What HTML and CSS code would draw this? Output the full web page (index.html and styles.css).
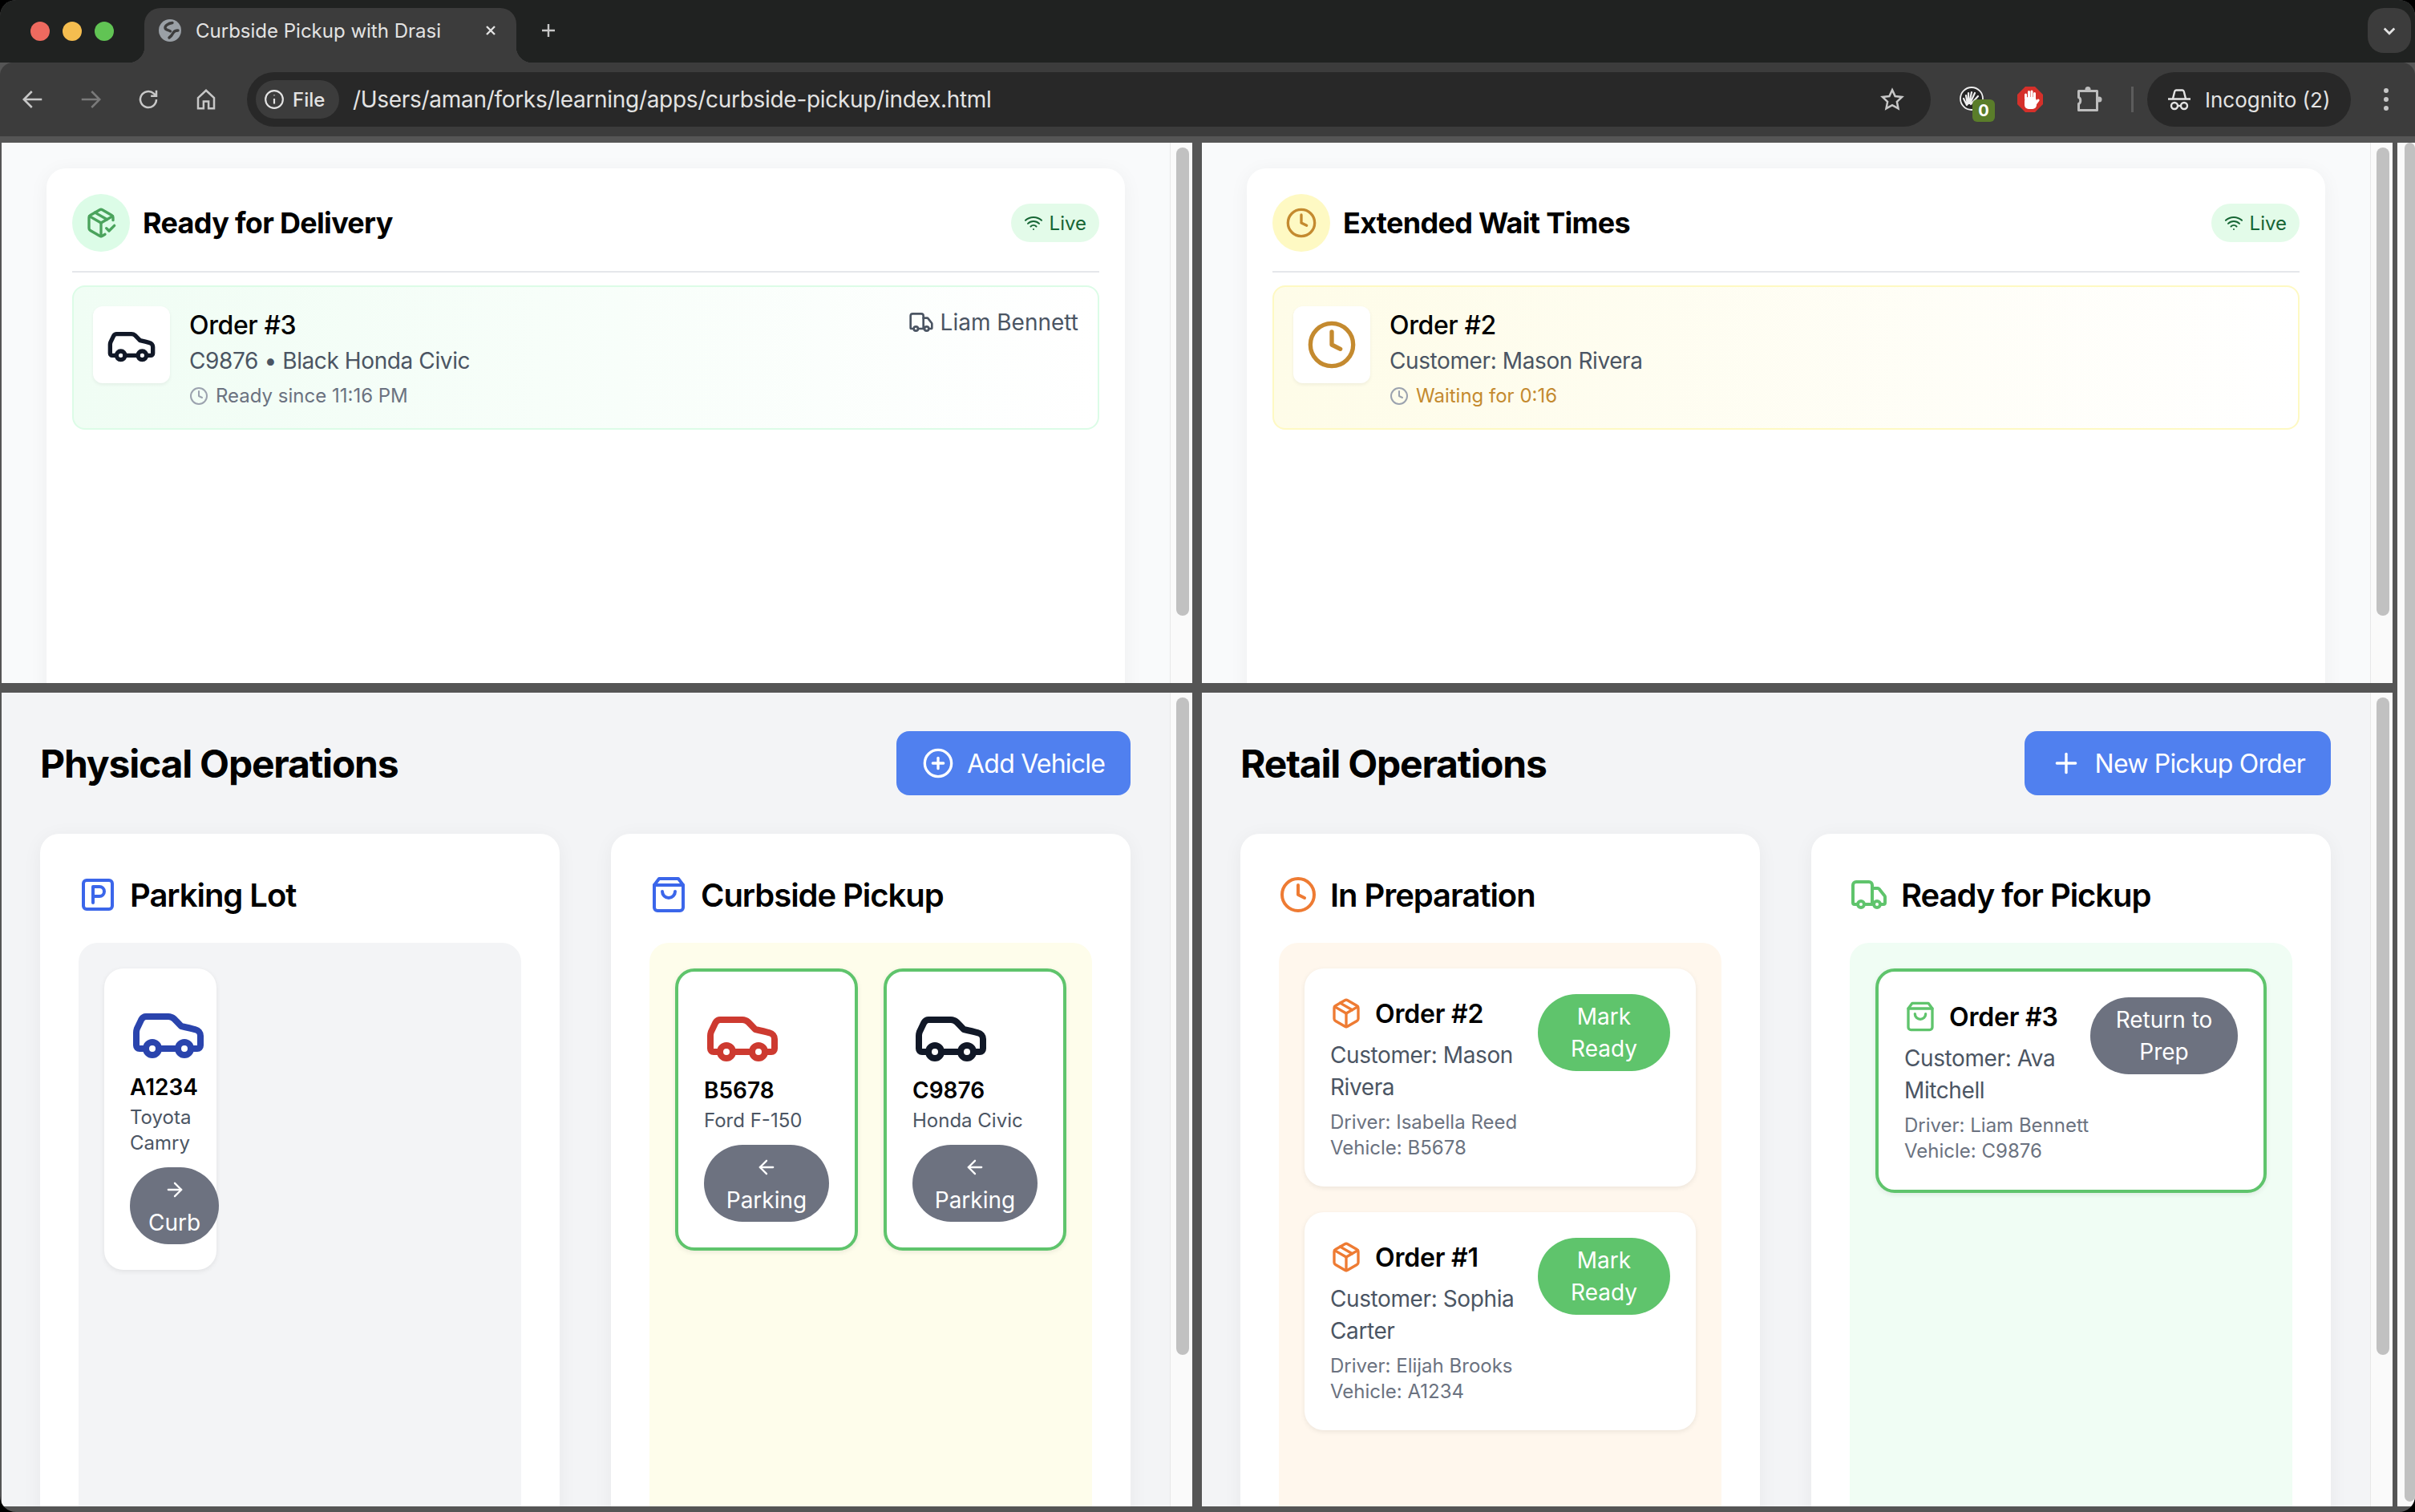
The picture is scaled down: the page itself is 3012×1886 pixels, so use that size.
FILE: index.html
```html
<!DOCTYPE html>
<html lang="en">
<head>
  <meta charset="UTF-8">
  <title>Curbside Pickup with Drasi</title>
  <link rel="stylesheet" href="styles.css">
</head>
<body>

<!-- icon set, same shapes as the app uses -->
<svg class="sprite" xmlns="http://www.w3.org/2000/svg">
  <symbol id="i-car" viewBox="0 0 24 24"><path d="M19 17h2c.6 0 1-.4 1-1v-3c0-.9-.7-1.7-1.5-1.9C18.7 10.6 16 10 16 10s-1.3-1.4-2.2-2.3c-.5-.4-1.1-.7-1.8-.7H5c-.6 0-1.1.4-1.4.9l-1.4 2.9A3.7 3.7 0 0 0 2 12v4c0 .6.4 1 1 1h2"/><circle cx="7" cy="17" r="2"/><path d="M9 17h6"/><circle cx="17" cy="17" r="2"/></symbol>
  <symbol id="i-clock" viewBox="0 0 24 24"><circle cx="12" cy="12" r="10"/><path d="M12 6v6l4 2"/></symbol>
  <symbol id="i-package-check" viewBox="0 0 24 24"><path d="m16 16 2 2 4-4"/><path d="M21 10V8a2 2 0 0 0-1-1.73l-7-4a2 2 0 0 0-2 0l-7 4A2 2 0 0 0 3 8v8a2 2 0 0 0 1 1.73l7 4a2 2 0 0 0 2 0l2-1.14"/><path d="m7.5 4.27 9 5.15"/><path d="M3.29 7 12 12l8.71-5"/><path d="M12 22V12"/></symbol>
  <symbol id="i-package" viewBox="0 0 24 24"><path d="m7.5 4.27 9 5.15"/><path d="M21 8a2 2 0 0 0-1-1.73l-7-4a2 2 0 0 0-2 0l-7 4A2 2 0 0 0 3 8v8a2 2 0 0 0 1 1.73l7 4a2 2 0 0 0 2 0l7-4A2 2 0 0 0 21 16Z"/><path d="m3.3 7 8.7 5 8.7-5"/><path d="M12 22V12"/></symbol>
  <symbol id="i-truck" viewBox="0 0 24 24"><path d="M14 18V6a2 2 0 0 0-2-2H4a2 2 0 0 0-2 2v11a1 1 0 0 0 1 1h2"/><path d="M15 18H9"/><path d="M19 18h2a1 1 0 0 0 1-1v-3.65a1 1 0 0 0-.22-.624l-3.48-4.35A1 1 0 0 0 17.52 8H14"/><circle cx="17" cy="18" r="2"/><circle cx="7" cy="18" r="2"/></symbol>
  <symbol id="i-wifi" viewBox="0 0 24 24"><path d="M12 20h.01"/><path d="M2 8.82a15 15 0 0 1 20 0"/><path d="M5 12.859a10 10 0 0 1 14 0"/><path d="M8.5 16.429a5 5 0 0 1 7 0"/></symbol>
  <symbol id="i-parking" viewBox="0 0 24 24"><rect x="3" y="3" width="18" height="18" rx="2"/><path d="M9 17V7h4a3 3 0 0 1 0 6H9"/></symbol>
  <symbol id="i-bag" viewBox="0 0 24 24"><path d="M6 2 3 6v14a2 2 0 0 0 2 2h14a2 2 0 0 0 2-2V6l-3-4Z"/><path d="M3 6h18"/><path d="M16 10a4 4 0 0 1-8 0"/></symbol>
  <symbol id="i-plus" viewBox="0 0 24 24"><path d="M5 12h14"/><path d="M12 5v14"/></symbol>
  <symbol id="i-plus-circle" viewBox="0 0 24 24"><circle cx="12" cy="12" r="10"/><path d="M8 12h8"/><path d="M12 8v8"/></symbol>
  <symbol id="i-arrow-right" viewBox="0 0 24 24"><path d="M5 12h14"/><path d="m12 5 7 7-7 7"/></symbol>
  <symbol id="i-arrow-left" viewBox="0 0 24 24"><path d="m12 19-7-7 7-7"/><path d="M19 12H5"/></symbol>
</svg>

<div class="window">

  <div class="tabstrip">
    <div class="lights">
      <span class="light light-red"></span>
      <span class="light light-yellow"></span>
      <span class="light light-green"></span>
    </div>
    <div class="tab">
      <svg class="favicon" viewBox="0 0 28 28"><circle cx="14" cy="14" r="14" fill="#9aa0a6"/><path d="M17 4.500C12 5 7.500 8 8 11c.5 3 5 2 6.500 4" fill="none" stroke="#3c3c3c" stroke-width="3.400" stroke-linecap="round"/><path d="M24 14c-3 0-5 1-6 3s-2 4-5 6" fill="none" stroke="#3c3c3c" stroke-width="3.400" stroke-linecap="round"/></svg>
      <span class="tab-title">Curbside Pickup with Drasi</span>
      <svg class="tab-close" viewBox="0 0 16 16"><path d="M3 3l10 10M13 3L3 13"/></svg>
    </div>
    <svg class="new-tab" viewBox="0 0 20 20"><path d="M10 2v16M2 10h16"/></svg>
    <div class="tab-search">
      <svg viewBox="0 0 16 16"><path d="M3 6l5 5 5-5"/></svg>
    </div>
  </div>

  <div class="toolbar">
    <svg class="tool" viewBox="0 0 24 24"><path d="M21 12H4M11 4l-8 8 8 8"/></svg>
    <svg class="tool tool-off" viewBox="0 0 24 24"><path d="M3 12h17M13 4l8 8-8 8"/></svg>
    <svg class="tool" viewBox="0 0 24 24"><path d="M20 12a8 8 0 1 1-2.6-5.900L20 8.500M20 3v5.500h-5.500"/></svg>
    <svg class="tool" viewBox="0 0 24 24"><path d="M4 10.500 12 3l8 7.500V21h-5.500v-7h-5v7H4Z"/></svg>
    <div class="omnibox">
      <div class="file-chip">
        <svg viewBox="0 0 24 24"><circle cx="12" cy="12" r="10"/><path d="M12 11v6M12 7v.5"/></svg>
        <span>File</span>
      </div>
      <span class="url">/Users/aman/forks/learning/apps/curbside-pickup/index.html</span>
      <svg class="star" viewBox="0 0 24 24"><path d="m12 2.500 2.900 6.300 6.800.8-5 4.700 1.300 6.800-6-3.400-6 3.400 1.300-6.800-5-4.700 6.800-.8Z"/></svg>
    </div>
    <div class="ext-fan">
      <svg viewBox="0 0 32 32"><circle cx="15" cy="15" r="14" fill="#262626" stroke="#eee" stroke-width="1.800"/><path d="M9 23 5 15M10 22 8 11M11 21l0-13M12 21 15 7M13 21l6-13M14 22l9-10" fill="none" stroke="#eee" stroke-width="2.200" stroke-linecap="round"/></svg>
      <span class="ext-badge">0</span>
    </div>
    <svg class="ext-stop" viewBox="0 0 32 32"><path d="M10 0h12l10 10v12L22 32H10L0 22V10Z" fill="#d5302a"/><rect x="9" y="13" width="15" height="15" rx="5" fill="#fff"/><path d="M10.500 15V10M14.500 15V6.500M18 15V6M21.500 15V8.500M23 21l3-4" fill="none" stroke="#fff" stroke-width="3" stroke-linecap="round"/></svg>
    <svg class="ext-puzzle" viewBox="0 0 32 32"><path d="M2.500 5.500h23v24h-23v-8c3-1 3-7 0-8Z"/><circle cx="14" cy="3.500" r="3.500"/><circle cx="28" cy="16" r="3.500"/></svg>
    <span class="tool-sep"></span>
    <div class="incognito">
      <svg viewBox="0 0 28 28"><path d="M6 13 8.200 4.200C8.500 3 9 2.500 10 2.500h8c1 0 1.500.5 1.800 1.700L22 13M0 13.500h28"/><circle cx="8" cy="22" r="4"/><circle cx="20" cy="22" r="4"/><path d="M12 22h4"/></svg>
      <span>Incognito (2)</span>
    </div>
    <div class="menu-dots"><i></i><i></i><i></i></div>
  </div>

  <div class="frames">

    <!-- Delivery dashboard -->
    <section class="frame frame-light">
      <div class="frame-body dash">
        <div class="dash-card">
          <div class="dash-head">
            <div class="dash-head-left">
              <span class="round-icon round-green"><svg class="icon icon-40"><use href="#i-package-check"/></svg></span>
              <h2 class="dash-title">Ready for Delivery</h2>
            </div>
            <span class="live"><svg class="icon icon-24"><use href="#i-wifi"/></svg>Live</span>
          </div>
          <div class="alert alert-green">
            <span class="alert-icon car-dark"><svg class="icon icon-64"><use href="#i-car"/></svg></span>
            <div class="alert-text">
              <div class="alert-order">Order #3</div>
              <div class="alert-sub">C9876 • Black Honda Civic</div>
              <div class="alert-time"><svg class="icon icon-24"><use href="#i-clock"/></svg>Ready since 11:16 PM</div>
            </div>
            <div class="alert-driver"><svg class="icon icon-32"><use href="#i-truck"/></svg>Liam Bennett</div>
          </div>
        </div>
      </div>
      <div class="scrollbar"><div class="thumb thumb-short"></div></div>
    </section>

    <!-- Delay dashboard -->
    <section class="frame frame-light">
      <div class="frame-body dash">
        <div class="dash-card">
          <div class="dash-head">
            <div class="dash-head-left">
              <span class="round-icon round-yellow"><svg class="icon icon-40"><use href="#i-clock"/></svg></span>
              <h2 class="dash-title">Extended Wait Times</h2>
            </div>
            <span class="live"><svg class="icon icon-24"><use href="#i-wifi"/></svg>Live</span>
          </div>
          <div class="alert alert-yellow">
            <span class="alert-icon amber"><svg class="icon icon-64"><use href="#i-clock"/></svg></span>
            <div class="alert-text">
              <div class="alert-order">Order #2</div>
              <div class="alert-sub">Customer: Mason Rivera</div>
              <div class="alert-time"><svg class="icon icon-24"><use href="#i-clock"/></svg><span class="amber">Waiting for 0:16</span></div>
            </div>
          </div>
        </div>
      </div>
      <div class="scrollbar"><div class="thumb thumb-short"></div></div>
    </section>

    <!-- Physical operations -->
    <section class="frame">
      <div class="frame-body ops">
        <div class="ops-head">
          <h1 class="ops-title">Physical Operations</h1>
          <button class="btn-primary"><svg class="icon icon-40"><use href="#i-plus-circle"/></svg>Add Vehicle</button>
        </div>
        <div class="ops-grid">
          <div class="column">
            <h3 class="column-title"><svg class="icon icon-48 blue"><use href="#i-parking"/></svg>Parking Lot</h3>
            <div class="zone zone-gray">
              <div class="vehicle vehicle-narrow">
                <svg class="icon icon-96 car-blue"><use href="#i-car"/></svg>
                <div class="plate">A1234</div>
                <div class="model">Toyota Camry</div>
                <button class="btn-move btn-curb"><svg class="icon icon-28"><use href="#i-arrow-right"/></svg>Curb</button>
              </div>
            </div>
          </div>
          <div class="column">
            <h3 class="column-title"><svg class="icon icon-48 blue"><use href="#i-bag"/></svg>Curbside Pickup</h3>
            <div class="zone zone-yellow">
              <div class="vehicle vehicle-ready">
                <svg class="icon icon-96 car-red"><use href="#i-car"/></svg>
                <div class="plate">B5678</div>
                <div class="model">Ford F-150</div>
                <button class="btn-move"><svg class="icon icon-28"><use href="#i-arrow-left"/></svg>Parking</button>
              </div>
              <div class="vehicle vehicle-ready">
                <svg class="icon icon-96 car-dark"><use href="#i-car"/></svg>
                <div class="plate">C9876</div>
                <div class="model">Honda Civic</div>
                <button class="btn-move"><svg class="icon icon-28"><use href="#i-arrow-left"/></svg>Parking</button>
              </div>
            </div>
          </div>
        </div>
      </div>
      <div class="scrollbar"><div class="thumb thumb-tall"></div></div>
    </section>

    <!-- Retail operations -->
    <section class="frame">
      <div class="frame-body ops">
        <div class="ops-head">
          <h1 class="ops-title">Retail Operations</h1>
          <button class="btn-primary"><svg class="icon icon-40"><use href="#i-plus"/></svg>New Pickup Order</button>
        </div>
        <div class="ops-grid">
          <div class="column">
            <h3 class="column-title"><svg class="icon icon-48 orange"><use href="#i-clock"/></svg>In Preparation</h3>
            <div class="zone zone-orange">
              <div class="order">
                <div class="order-info">
                  <div class="order-name"><svg class="icon icon-40 orange"><use href="#i-package"/></svg>Order #2</div>
                  <div class="order-customer">Customer: Mason Rivera</div>
                  <div class="order-meta">Driver: Isabella Reed<br>Vehicle: B5678</div>
                </div>
                <button class="btn-order btn-green">Mark Ready</button>
              </div>
              <div class="order">
                <div class="order-info">
                  <div class="order-name"><svg class="icon icon-40 orange"><use href="#i-package"/></svg>Order #1</div>
                  <div class="order-customer">Customer: Sophia Carter</div>
                  <div class="order-meta">Driver: Elijah Brooks<br>Vehicle: A1234</div>
                </div>
                <button class="btn-order btn-green">Mark Ready</button>
              </div>
            </div>
          </div>
          <div class="column">
            <h3 class="column-title"><svg class="icon icon-48 green"><use href="#i-truck"/></svg>Ready for Pickup</h3>
            <div class="zone zone-green">
              <div class="order order-ready">
                <div class="order-info">
                  <div class="order-name"><svg class="icon icon-40 green"><use href="#i-bag"/></svg>Order #3</div>
                  <div class="order-customer">Customer: Ava Mitchell</div>
                  <div class="order-meta">Driver: Liam Bennett<br>Vehicle: C9876</div>
                </div>
                <button class="btn-order btn-gray">Return to Prep</button>
              </div>
            </div>
          </div>
        </div>
      </div>
      <div class="scrollbar"><div class="thumb thumb-tall"></div></div>
    </section>

  </div>

  <div class="page-scroll"><div class="page-thumb"></div></div>
</div>

</body>
</html>
```

FILE: styles.css
```css
* {
  box-sizing: border-box;
}
html, body {
  margin: 0;
  height: 100%;
  overflow: hidden;
  background: #000;
}
body {
  font-family: Inter, "Liberation Sans", sans-serif;
  color: #000;
}
h1, h2, h3 {
  margin: 0;
}
button {
  font-family: inherit;
  border: 0;
}
.sprite {
  display: none;
}

.icon {
  flex: none;
  fill: none;
  stroke: currentColor;
  stroke-width: 2;
  stroke-linecap: round;
  stroke-linejoin: round;
}
.icon-24 { width: 24px; height: 24px; }
.icon-28 { width: 28px; height: 28px; }
.icon-32 { width: 32px; height: 32px; }
.icon-40 { width: 40px; height: 40px; }
.icon-48 { width: 48px; height: 48px; }
.icon-64 { width: 64px; height: 64px; }
.icon-96 { width: 96px; height: 96px; }

.blue { color: #3b66ea; }
.orange { color: #ee7b33; }
.green { color: #5fc46c; }
.amber { color: #c48a2f; }
.car-blue { color: #2a44ad; }
.car-red { color: #cd3a30; }
.car-dark { color: #111827; }

/* browser window */
.window {
  position: relative;
  height: 1886px;
  background: #555;
  border-radius: 20px;
  overflow: hidden;
}

.tabstrip {
  height: 78px;
  background: #202221;
  display: flex;
  align-items: flex-start;
}
.lights {
  width: 180px;
  height: 78px;
  padding-left: 38px;
  display: flex;
  align-items: center;
  gap: 16px;
}
.light {
  width: 24px;
  height: 24px;
  border-radius: 50%;
}
.light-red { background: #ee6a5f; }
.light-yellow { background: #f5bd4f; }
.light-green { background: #61c454; }
.tab {
  position: relative;
  width: 464px;
  height: 68px;
  margin-top: 10px;
  padding: 0 24px 12px 18px;
  background: #3c3c3c;
  border-radius: 20px 20px 0 0;
  display: flex;
  align-items: center;
  gap: 18px;
}
.tab::before,
.tab::after {
  content: "";
  position: absolute;
  bottom: 0;
  width: 20px;
  height: 20px;
}
.tab::before {
  left: -20px;
  background: radial-gradient(circle at 0 0, #202221 20px, #3c3c3c 20.5px);
}
.tab::after {
  right: -20px;
  background: radial-gradient(circle at 100% 0, #202221 20px, #3c3c3c 20.5px);
}
.favicon {
  width: 28px;
  height: 28px;
  flex: none;
}
.tab-title {
  flex: 1;
  font-size: 24px;
  color: #e3e3e3;
  white-space: nowrap;
}
.tab-close {
  width: 16px;
  height: 16px;
  fill: none;
  stroke: #e3e3e3;
  stroke-width: 2.4;
}
.new-tab {
  width: 20px;
  height: 20px;
  margin: 28px 0 0 30px;
  fill: none;
  stroke: #c7c7c7;
  stroke-width: 2.4;
}
.tab-search {
  margin: 10px 5px 0 auto;
  width: 54px;
  height: 56px;
  background: #3c3c3c;
  border-radius: 20px;
  display: flex;
  align-items: center;
  justify-content: center;
}
.tab-search svg {
  width: 20px;
  height: 20px;
  fill: none;
  stroke: #e3e3e3;
  stroke-width: 2.2;
}

.toolbar {
  height: 92px;
  background: #3c3c3c;
  display: flex;
  align-items: center;
  padding-left: 26px;
  border-radius: 16px 16px 0 0;
}
.tool {
  width: 30px;
  height: 30px;
  margin-right: 42px;
  fill: none;
  stroke: #c7c7c7;
  stroke-width: 2;
  flex: none;
}
.tool-off {
  stroke: #7a7a7a;
}
.omnibox {
  width: 2100px;
  height: 68px;
  margin-left: -6px;
  background: #282828;
  border-radius: 34px;
  display: flex;
  align-items: center;
  padding: 0 33px 0 11px;
  flex: none;
}
.file-chip {
  width: 104px;
  height: 48px;
  background: #3c3c3c;
  border-radius: 24px;
  display: flex;
  align-items: center;
  padding-left: 10px;
  gap: 10px;
  font-size: 24px;
  font-weight: 500;
  color: #e3e3e3;
}
.file-chip svg {
  width: 26px;
  height: 26px;
  fill: none;
  stroke: #e3e3e3;
  stroke-width: 2;
}
.url {
  margin-left: 17px;
  flex: 1;
  font-size: 28px;
  letter-spacing: -0.3px;
  color: #e3e3e3;
  white-space: nowrap;
}
.star {
  width: 30px;
  height: 30px;
  fill: none;
  stroke: #c7c7c7;
  stroke-width: 2;
}
.ext-fan {
  position: relative;
  width: 32px;
  height: 32px;
  margin-left: 36px;
  flex: none;
}
.ext-fan svg {
  display: block;
}
.ext-badge {
  position: absolute;
  left: 16px;
  top: 16px;
  width: 28px;
  height: 28px;
  background: #5a7d2a;
  border-radius: 6px;
  font-size: 20px;
  font-weight: 700;
  color: #fff;
  text-align: center;
  line-height: 28px;
}
.ext-stop {
  width: 32px;
  height: 32px;
  margin-left: 40px;
  flex: none;
}
.ext-puzzle {
  width: 32px;
  height: 32px;
  margin-left: 42px;
  fill: none;
  stroke: #bdbdbd;
  stroke-width: 3;
  stroke-linejoin: round;
  flex: none;
}
.ext-puzzle circle {
  fill: #bdbdbd;
  stroke: none;
}
.tool-sep {
  width: 3px;
  height: 32px;
  margin-left: 36px;
  background: #5c5c5c;
  flex: none;
}
.incognito {
  width: 254px;
  height: 68px;
  margin-left: 17px;
  background: #282828;
  border-radius: 34px;
  display: flex;
  align-items: center;
  padding-left: 26px;
  gap: 18px;
  font-size: 26px;
  color: #e3e3e3;
  flex: none;
}
.incognito svg {
  width: 28px;
  height: 28px;
  fill: none;
  stroke: #e3e3e3;
  stroke-width: 2.400;
}
.menu-dots {
  margin-left: 41px;
  display: flex;
  flex-direction: column;
  gap: 5px;
}
.menu-dots i {
  width: 6px;
  height: 6px;
  border-radius: 50%;
  background: #c7c7c7;
}

/* the four iframes */
.frames {
  height: 1708px;
  padding: 8px 28px 7px 2px;
  display: grid;
  grid-template-columns: 1485px 1485px;
  grid-template-rows: 674px 1015px;
  gap: 12px;
}
.frame {
  display: flex;
  background: #f3f4f6;
  overflow: hidden;
  height: 100%;
}
.frame-light {
  background: #f9fafb;
}
.frame-body {
  width: 1457px;
  flex: none;
}
.scrollbar {
  width: 28px;
  flex: none;
  padding: 6px 0 0 7px;
  background: #fafafa;
  border-left: 1px solid #e8e8e8;
}
.thumb {
  width: 16px;
  background: #c1c1c1;
  border-radius: 8px;
}
.thumb-short { height: 584px; }
.thumb-tall { height: 820px; }
.page-scroll {
  position: absolute;
  right: 0;
  top: 178px;
  bottom: 7px;
  width: 22px;
  padding: 0 0 6px 9px;
  background: #fafafa;
}
.page-thumb {
  height: 100%;
  background: #c1c1c1;
  border-radius: 7px;
}

/* dashboards */
.dash {
  padding: 32px 56px 0;
}
.dash-card {
  height: 800px;
  padding: 32px;
  background: #fff;
  border-radius: 24px;
  box-shadow: 0 4px 24px rgba(0, 0, 0, 0.05);
}
.dash-head {
  display: flex;
  align-items: center;
  justify-content: space-between;
  padding-bottom: 24px;
  border-bottom: 2px solid #e5e7eb;
  margin-bottom: 16px;
}
.dash-head-left {
  display: flex;
  align-items: center;
  gap: 16px;
}
.round-icon {
  width: 72px;
  height: 72px;
  border-radius: 50%;
  display: flex;
  align-items: center;
  justify-content: center;
}
.round-green {
  background: #dcfce7;
  color: #4aa35c;
}
.round-yellow {
  background: #fef9c3;
  color: #c48a2f;
}
.dash-title {
  font-size: 36px;
  font-weight: 700;
  letter-spacing: -0.7px;
}
.live {
  height: 48px;
  padding: 0 16px;
  background: #e3fbe9;
  border-radius: 24px;
  display: flex;
  align-items: center;
  gap: 8px;
  font-size: 24px;
  color: #166534;
}
.alert {
  height: 180px;
  padding: 24px;
  border: 2px solid;
  border-radius: 16px;
  display: flex;
  gap: 24px;
}
.alert-green {
  border-color: #dcfce7;
  background: linear-gradient(to right, #f0fdf4, #fff);
}
.alert-yellow {
  border-color: #fef9c3;
  background: linear-gradient(to right, #fefce8, #fff);
}
.alert-icon {
  width: 96px;
  height: 96px;
  padding: 16px;
  background: #fff;
  border-radius: 12px;
  box-shadow: 0 2px 4px rgba(0, 0, 0, 0.06);
}
.alert-text {
  flex: 1;
}
.alert-order {
  font-size: 32px;
  font-weight: 500;
  line-height: 48px;
  letter-spacing: -0.4px;
}
.alert-sub {
  font-size: 28px;
  line-height: 40px;
  letter-spacing: -0.4px;
  color: #4b5563;
}
.alert-time {
  margin-top: 8px;
  display: flex;
  align-items: center;
  gap: 9px;
  font-size: 24px;
  line-height: 32px;
  color: #6b7280;
}
.alert-time .icon {
  color: #9ca3af;
}
.alert-driver {
  display: flex;
  align-items: center;
  gap: 8px;
  height: 40px;
  font-size: 28px;
  color: #4b5563;
}

/* operation boards */
.ops {
  padding: 48px;
}
.ops-head {
  width: 1360px;
  display: flex;
  align-items: center;
  justify-content: space-between;
  margin-bottom: 48px;
}
.ops-title {
  font-size: 48px;
  font-weight: 700;
  letter-spacing: -1.2px;
}
.btn-primary {
  height: 80px;
  padding: 0 32px;
  background: #5080ef;
  border-radius: 16px;
  display: flex;
  align-items: center;
  gap: 16px;
  font-size: 32px;
  letter-spacing: -0.8px;
  color: #fff;
}
.ops-grid {
  display: grid;
  grid-template-columns: 648px 648px;
  gap: 64px;
}
.column {
  height: 1000px;
  padding: 48px;
  background: #fff;
  border-radius: 24px;
  box-shadow: 0 4px 24px rgba(0, 0, 0, 0.05);
}
.column-title {
  display: flex;
  align-items: center;
  gap: 16px;
  height: 56px;
  margin-bottom: 32px;
  font-size: 40px;
  font-weight: 600;
  letter-spacing: -1.05px;
}
.zone {
  height: 900px;
  padding: 32px;
  border-radius: 24px;
  display: flex;
  align-items: flex-start;
  gap: 32px;
}
.zone-gray { background: #f3f4f6; }
.zone-yellow { background: #fefdeb; }
.zone-orange { background: #fff7ed; flex-direction: column; }
.zone-green { background: #f0fdf4; flex-direction: column; }

.vehicle {
  padding: 32px;
  background: #fff;
  border-radius: 24px;
  box-shadow: 0 2px 6px rgba(0, 0, 0, 0.08);
}
.vehicle .icon-96 {
  display: block;
}
.vehicle-narrow {
  width: 140px;
}
.vehicle-ready {
  border: 4px solid #5fc46c;
}
.plate {
  font-size: 28px;
  font-weight: 600;
  line-height: 40px;
}
.model {
  margin-top: 2px;
  font-size: 24px;
  line-height: 32px;
  color: #4b5563;
}
.btn-move {
  width: 156px;
  height: 96px;
  margin-top: 14px;
  padding: 14px 0 0;
  background: #6d7280;
  border-radius: 48px;
  display: flex;
  flex-direction: column;
  align-items: center;
  gap: 7px;
  font-size: 28px;
  line-height: 40px;
  color: #fff;
}
.btn-curb {
  width: 111px;
}

.order {
  width: 100%;
  height: 272px;
  padding: 32px;
  background: #fff;
  border-radius: 24px;
  box-shadow: 0 2px 6px rgba(0, 0, 0, 0.08);
  display: flex;
  align-items: flex-start;
  gap: 16px;
}
.order-ready {
  height: 280px;
  border: 4px solid #5fc46c;
}
.order-info {
  flex: 1;
  min-width: 0;
}
.order-name {
  display: flex;
  align-items: center;
  gap: 16px;
  height: 48px;
  margin-bottom: 8px;
  font-size: 32px;
  font-weight: 600;
  letter-spacing: -0.2px;
}
.order-customer {
  font-size: 28px;
  line-height: 40px;
  letter-spacing: -0.4px;
  color: #4b5563;
}
.order-meta {
  margin-top: 8px;
  font-size: 24px;
  line-height: 32px;
  color: #6b7280;
  white-space: nowrap;
}
.btn-order {
  height: 96px;
  padding: 8px 24px;
  border-radius: 48px;
  font-size: 28px;
  line-height: 40px;
  color: #fff;
  flex: none;
}
.btn-green {
  width: 165px;
  background: #5fc46c;
}
.btn-gray {
  width: 184px;
  background: #6d7280;
}
```
